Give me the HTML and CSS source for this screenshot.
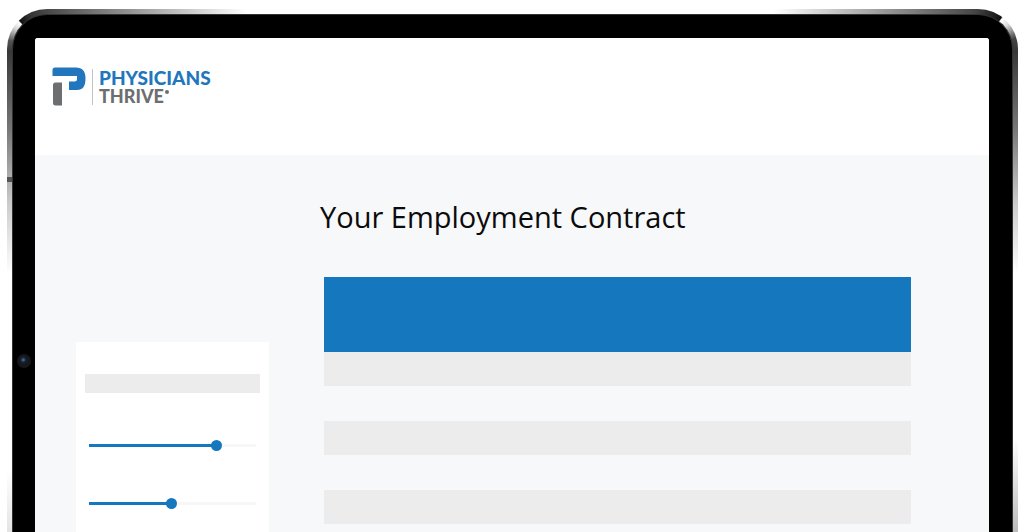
FILE: index.html
```html
<!DOCTYPE html>
<html lang="en">
<head>
<meta charset="utf-8">
<title>Physicians Thrive</title>
<link rel="stylesheet" href="styles.css">
</head>
<body>
<div class="device">
  <span class="antenna"></span>
  <div class="bezel">
    <span class="camera"></span>
    <div class="screen">
      <header class="header">
        <div class="brand">
          <svg class="brand-mark" viewBox="0 0 34 40" width="34" height="40" aria-hidden="true">
            <path fill="#2176bd" d="M3 .5H24Q33.500 .5 33.500 11.500Q33.500 23 25 23H17V14.500H22.500Q25 14.500 25 12V9H.500V3Q.500 .5 3 .5Z"/>
            <path fill="#6d6e70" d="M3.500 15.500H10V38.500H3.500Q1 38.500 1 36V18Q1 15.500 3.500 15.500Z"/>
          </svg>
          <div class="brand-name">
            <span class="brand-top">PHYSICIANS</span>
            <span class="brand-bottom">THRIVE<span class="brand-dot"></span></span>
          </div>
        </div>
      </header>
      <main class="main">
        <aside class="panel">
          <div class="panel-bar"></div>
          <input class="slider" type="range" step="0.5" value="78.5" aria-label="First filter" style="--fill:78.5%">
          <input class="slider" type="range" step="0.5" value="49.5" aria-label="Second filter" style="--fill:49.5%">
        </aside>
        <section class="contract">
          <h1 class="title">Your Employment Contract</h1>
          <div class="sheet">
            <div class="sheet-head"></div>
            <div class="rows">
              <div class="row"></div>
              <div class="row"></div>
              <div class="row"></div>
            </div>
          </div>
        </section>
      </main>
    </div>
  </div>
</div>
</body>
</html>
```
FILE: styles.css
```css
* {
  box-sizing: border-box;
}

body {
  margin: 0;
  height: 100vh;
  overflow: hidden;
  background: #fff;
  font-family: "Open Sans", "Noto Sans", sans-serif;
}

/* Metal rim: two corner tiles, a top strip and the two sides */
.device {
  position: relative;
  display: flex;
  height: calc(100vh - 9px);
  margin: 9px 6px 0 7px;
  padding: 5px 5px 0;
  border-radius: 40px 40px 0 0;
  background:
    conic-gradient(from 270deg at 100% 100%, #383838 0deg, #555 15deg, #ddd 35deg, #fff 44deg, #111 46deg, #333 60deg, #4a4a4a 90deg) 0 0 / 42px 42px no-repeat,
    conic-gradient(from 0deg at 0 100%, #444 0deg, #222 25deg, #111 37deg, #fff 39deg, #ddd 50deg, #444 72deg, #383838 90deg) 100% 0 / 42px 42px no-repeat,
    linear-gradient(90deg, #4a4a4a 42px, #fff 240px, #fff calc(100% - 245px), #444 calc(100% - 42px)) 0 0 / 100% 6px no-repeat,
    linear-gradient(#383838 42px, #777 120px, #ccc 195px, #fff 265px, #fff 460px, #e4e4e4) 0 0 / 50% 100% no-repeat,
    linear-gradient(#383838 42px, #777 120px, #ccc 195px, #fff 265px, #fff 430px, #bbb) 100% 0 / 50% 100% no-repeat;
}

.antenna {
  position: absolute;
  left: 0;
  top: 168px;
  width: 5px;
  height: 5px;
  background: #555;
}

.bezel {
  position: relative;
  flex: 1;
  display: flex;
  padding: 23px 23px 0 22px;
  border: 1px solid #333;
  border-bottom: 0;
  border-radius: 35px 35px 0 0;
  background: #000;
}

.camera {
  position: absolute;
  left: 4px;
  top: 339px;
  width: 14px;
  height: 14px;
  border-radius: 50%;
  background: radial-gradient(circle at 45% 42%, #3d5f8d 0 1px, #1b2a40 2px, #16171a 4px);
}

.screen {
  flex: 1;
  display: flex;
  flex-direction: column;
  overflow: hidden;
  border-radius: 3px 3px 0 0;
  background: #f7f8fa;
}

.header {
  flex: none;
  padding: 29px 17px 48px;
  background: #fff;
}

.brand {
  display: flex;
  gap: 6px;
}

.brand-name {
  display: flex;
  flex-direction: column;
  height: 36px;
  margin-top: 2px;
  padding-left: 6px;
  border-left: 1px solid #c4c4c4;
  font-family: Lato, sans-serif;
  font-weight: 900;
  line-height: 18px;
}

.brand-top {
  color: #2176bd;
  font-size: 19px;
}

.brand-bottom {
  display: flex;
  gap: 1px;
  color: #6d6e70;
  font-size: 18px;
}

.brand-dot {
  width: 4px;
  height: 4px;
  margin-top: 3px;
  border-radius: 50%;
  background: #6d6e70;
}

.main {
  flex: 1;
  display: grid;
  grid-template-columns: 193fr 591fr;
  column-gap: 51px;
  padding: 42px 78px 0 41px;
}

.panel {
  display: flex;
  flex-direction: column;
  margin-top: 145px;
  padding: 32px 9px 0;
  background: #fff;
}

.panel-bar {
  height: 19px;
  margin-bottom: 47px;
  background: #ececec;
}

.slider {
  appearance: none;
  height: 11px;
  margin: 0 4px 47px;
  background: linear-gradient(90deg, #1577be var(--fill), #f7f7f8 var(--fill)) center / 100% 3px no-repeat;
}

.slider::-webkit-slider-thumb {
  appearance: none;
  width: 11px;
  height: 11px;
  border-radius: 50%;
  background: #1577be;
}

.title {
  margin: 0;
  font-size: 29px;
  font-weight: 400;
  line-height: 40px;
  color: #0b0b0b;
}

.sheet {
  margin-top: 40px;
  padding-left: 4px;
}

.sheet-head {
  height: 75px;
  background: #1577be;
}

.rows {
  display: grid;
  gap: 35px;
}

.row {
  height: 34px;
  background: #ececec;
}
```
